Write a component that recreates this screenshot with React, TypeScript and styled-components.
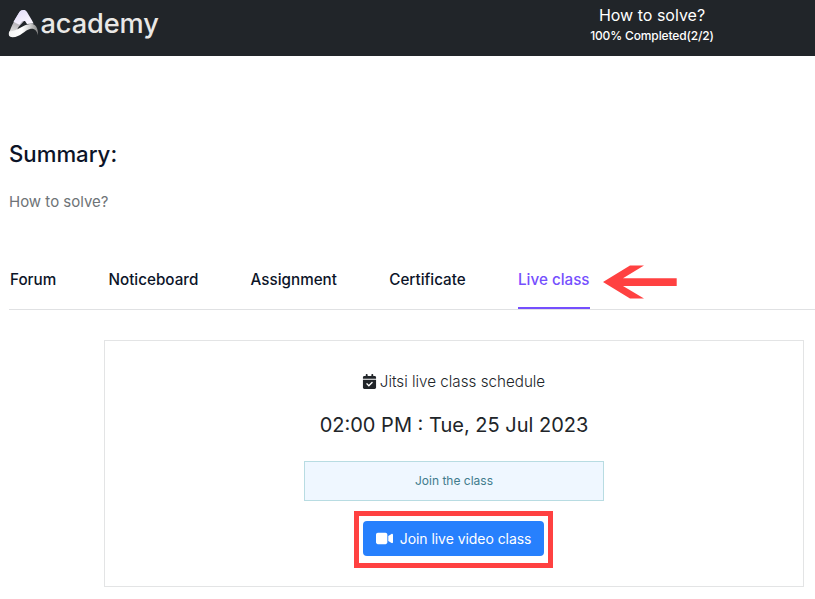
import React from 'react';
import styled, { createGlobalStyle } from 'styled-components';
import { FaCalendarCheck, FaVideo } from 'react-icons/fa6';

const GlobalStyle = createGlobalStyle`
  * { box-sizing: border-box; }
  body {
    margin: 0;
    background: #fff;
    color: #212529;
    font-family: Inter, sans-serif;
    overflow: hidden;
  }
  h1, h2, p { margin: 0; font-weight: 400; }
`;

const Page = styled.div`
  height: 599px;
  overflow: hidden;
`;

const Header = styled.header`
  display: flex;
  align-items: flex-start;
  height: 56px;
  background: #212529;
  color: #fff;
`;

const Logo = styled.div`
  display: flex;
  flex: none;
  width: 489px;
  padding: 8px 0 0 8px;
`;

const LogoMark = styled.svg`
  flex: none;
  width: 32px;
  height: 32px;
`;

const LogoText = styled.span`
  margin-left: 0.5px;
  font-size: 27.2px;
  line-height: 32px;
  font-weight: 450;
  letter-spacing: -0.1px;
  color: #e9e8e6;
`;

const Progress = styled.div`
  flex: none;
  width: 326px;
  padding-top: 3px;
  text-align: center;
`;

const CourseTitle = styled.h1`
  font-size: 16px;
  line-height: 24px;
`;

const Completed = styled.p`
  margin-top: 1px;
  font-size: 12px;
  line-height: 16px;
  font-weight: 500;
  letter-spacing: -0.14px;
`;

const Main = styled.main`
  padding: 84px 0 0 9px;
`;

const SummaryTitle = styled.h2`
  font-size: 22.2px;
  line-height: 28px;
  font-weight: 500;
  color: #0c1428;
`;

const SummaryText = styled.p`
  margin-top: 22px;
  font-size: 15px;
  line-height: 24px;
  color: #6e7377;
`;

const TabBar = styled.nav`
  display: flex;
  align-items: flex-start;
  gap: 52.3px;
  height: 56px;
  margin-top: 40px;
  padding-left: 1px;
  border-bottom: 1px solid #e0e1e3;
`;

const Tab = styled.a<{ $active?: boolean }>`
  height: 55px;
  padding-top: 14px;
  border-bottom: 2px solid ${(p) => (p.$active ? '#754ffe' : 'transparent')};
  color: ${(p) => (p.$active ? '#754ffe' : '#0c1428')};
  font-size: 15.22px;
  line-height: 24px;
  font-weight: 500;
  white-space: nowrap;
`;

const Arrow = styled.svg`
  flex: none;
  width: 74px;
  height: 34px;
  margin: 11px 0 0 -38.6px;
`;

const Card = styled.section`
  display: flex;
  flex-direction: column;
  align-items: center;
  width: 700px;
  height: 247px;
  margin: 30px 0 0 95px;
  padding-top: 29px;
  border: 1px solid #e3e4e5;
`;

const Schedule = styled.p`
  display: flex;
  align-items: center;
  gap: 3px;
  margin-left: -1px;
  font-size: 15.2px;
  line-height: 24px;
  font-weight: 300;

  svg {
    margin-top: -2px;
  }
`;

const DateTime = styled.h2`
  margin-top: 17px;
  font-size: 20px;
  line-height: 28px;
`;

const Notice = styled.div`
  width: 300px;
  height: 40px;
  margin-top: 22px;
  border: 1px solid #b8dce2;
  background: #eff7ff;
  color: #417b8c;
  font-size: 12px;
  line-height: 38px;
  text-align: center;
`;

const Highlight = styled.div`
  width: 199px;
  height: 57px;
  margin: 10px 0 0 -1px;
  padding: 5px 4px;
  border: 5px solid #ff4141;
`;

const JoinButton = styled.button`
  display: flex;
  align-items: center;
  width: 181px;
  height: 35px;
  padding: 0 0 0 13px;
  gap: 6.7px;
  border: 0;
  border-radius: 4px;
  background: #2780fd;
  color: #fff;
  font: 400 14px/20px Inter, sans-serif;
  letter-spacing: -0.05px;
  white-space: nowrap;
`;

const tabs = ['Forum', 'Noticeboard', 'Assignment', 'Certificate', 'Live class'];

function AcademyMark() {
  return (
    <LogoMark viewBox="0 0 32 32" aria-hidden="true">
      <defs>
        <linearGradient id="peak" x1="0" y1="0" x2="0.7" y2="1">
          <stop offset="0" stopColor="#e0d9f8" />
          <stop offset="1" stopColor="#faf7ff" />
        </linearGradient>
        <linearGradient id="leg" x1="0.6" y1="0" x2="0.3" y2="1">
          <stop offset="0" stopColor="#ded6f5" />
          <stop offset="0.6" stopColor="#b9b7bc" />
          <stop offset="1" stopColor="#e4e4e4" />
        </linearGradient>
        <linearGradient id="swoosh" x1="0" y1="0" x2="1" y2="0">
          <stop offset="0" stopColor="#f3f3f3" />
          <stop offset="0.45" stopColor="#fff" />
          <stop offset="0.72" stopColor="#d0d0d0" />
          <stop offset="1" stopColor="#858585" />
        </linearGradient>
      </defs>
      <path d="M1 26C2.5 19 8 9.5 11.5 4C13.5 1.6 16.8 1.2 18.5 4L16 13L10.5 19L8 24Z" fill="url(#leg)" />
      <path d="M11.5 4C13.2 1.5 17.2 1 19 4C21.4 8 23.6 11.3 25.6 15.5L19 16L17 13L14.3 13.1L11.4 16.7L5.5 13.8Z" fill="url(#peak)" />
      <path d="M1.2 23.5C.2 27 1 29.2 4.5 29.2C12.6 29 16.4 22.2 22 20.9C26.8 20 28.8 22.8 30 27.2C30.4 20 27.2 15.4 22 15.9C15 16.4 10.2 22.8 1.2 23.5Z" fill="url(#swoosh)" />
    </LogoMark>
  );
}

export default function App() {
  return (
    <Page>
      <GlobalStyle />
      <Header>
        <Logo>
          <AcademyMark />
          <LogoText>academy</LogoText>
        </Logo>
        <Progress>
          <CourseTitle>How to solve?</CourseTitle>
          <Completed>100% Completed(2/2)</Completed>
        </Progress>
      </Header>
      <Main>
        <SummaryTitle>Summary:</SummaryTitle>
        <SummaryText>How to solve?</SummaryText>
        <TabBar>
          {tabs.map((label) => (
            <Tab key={label} $active={label === 'Live class'}>{label}</Tab>
          ))}
          <Arrow viewBox="0 0 74 34" aria-hidden="true">
            <path d="M0 17L27 .5H41L20 13.2H73.7V21H20L41 33.5H27Z" fill="#ff4141" />
          </Arrow>
        </TabBar>
        <Card>
          <Schedule>
            <FaCalendarCheck size={15} />
            <span>Jitsi live class schedule</span>
          </Schedule>
          <DateTime>02:00 PM : Tue, 25 Jul 2023</DateTime>
          <Notice>Join the class</Notice>
          <Highlight>
            <JoinButton>
              <FaVideo size={17} />
              <span>Join live video class</span>
            </JoinButton>
          </Highlight>
        </Card>
      </Main>
    </Page>
  );
}
